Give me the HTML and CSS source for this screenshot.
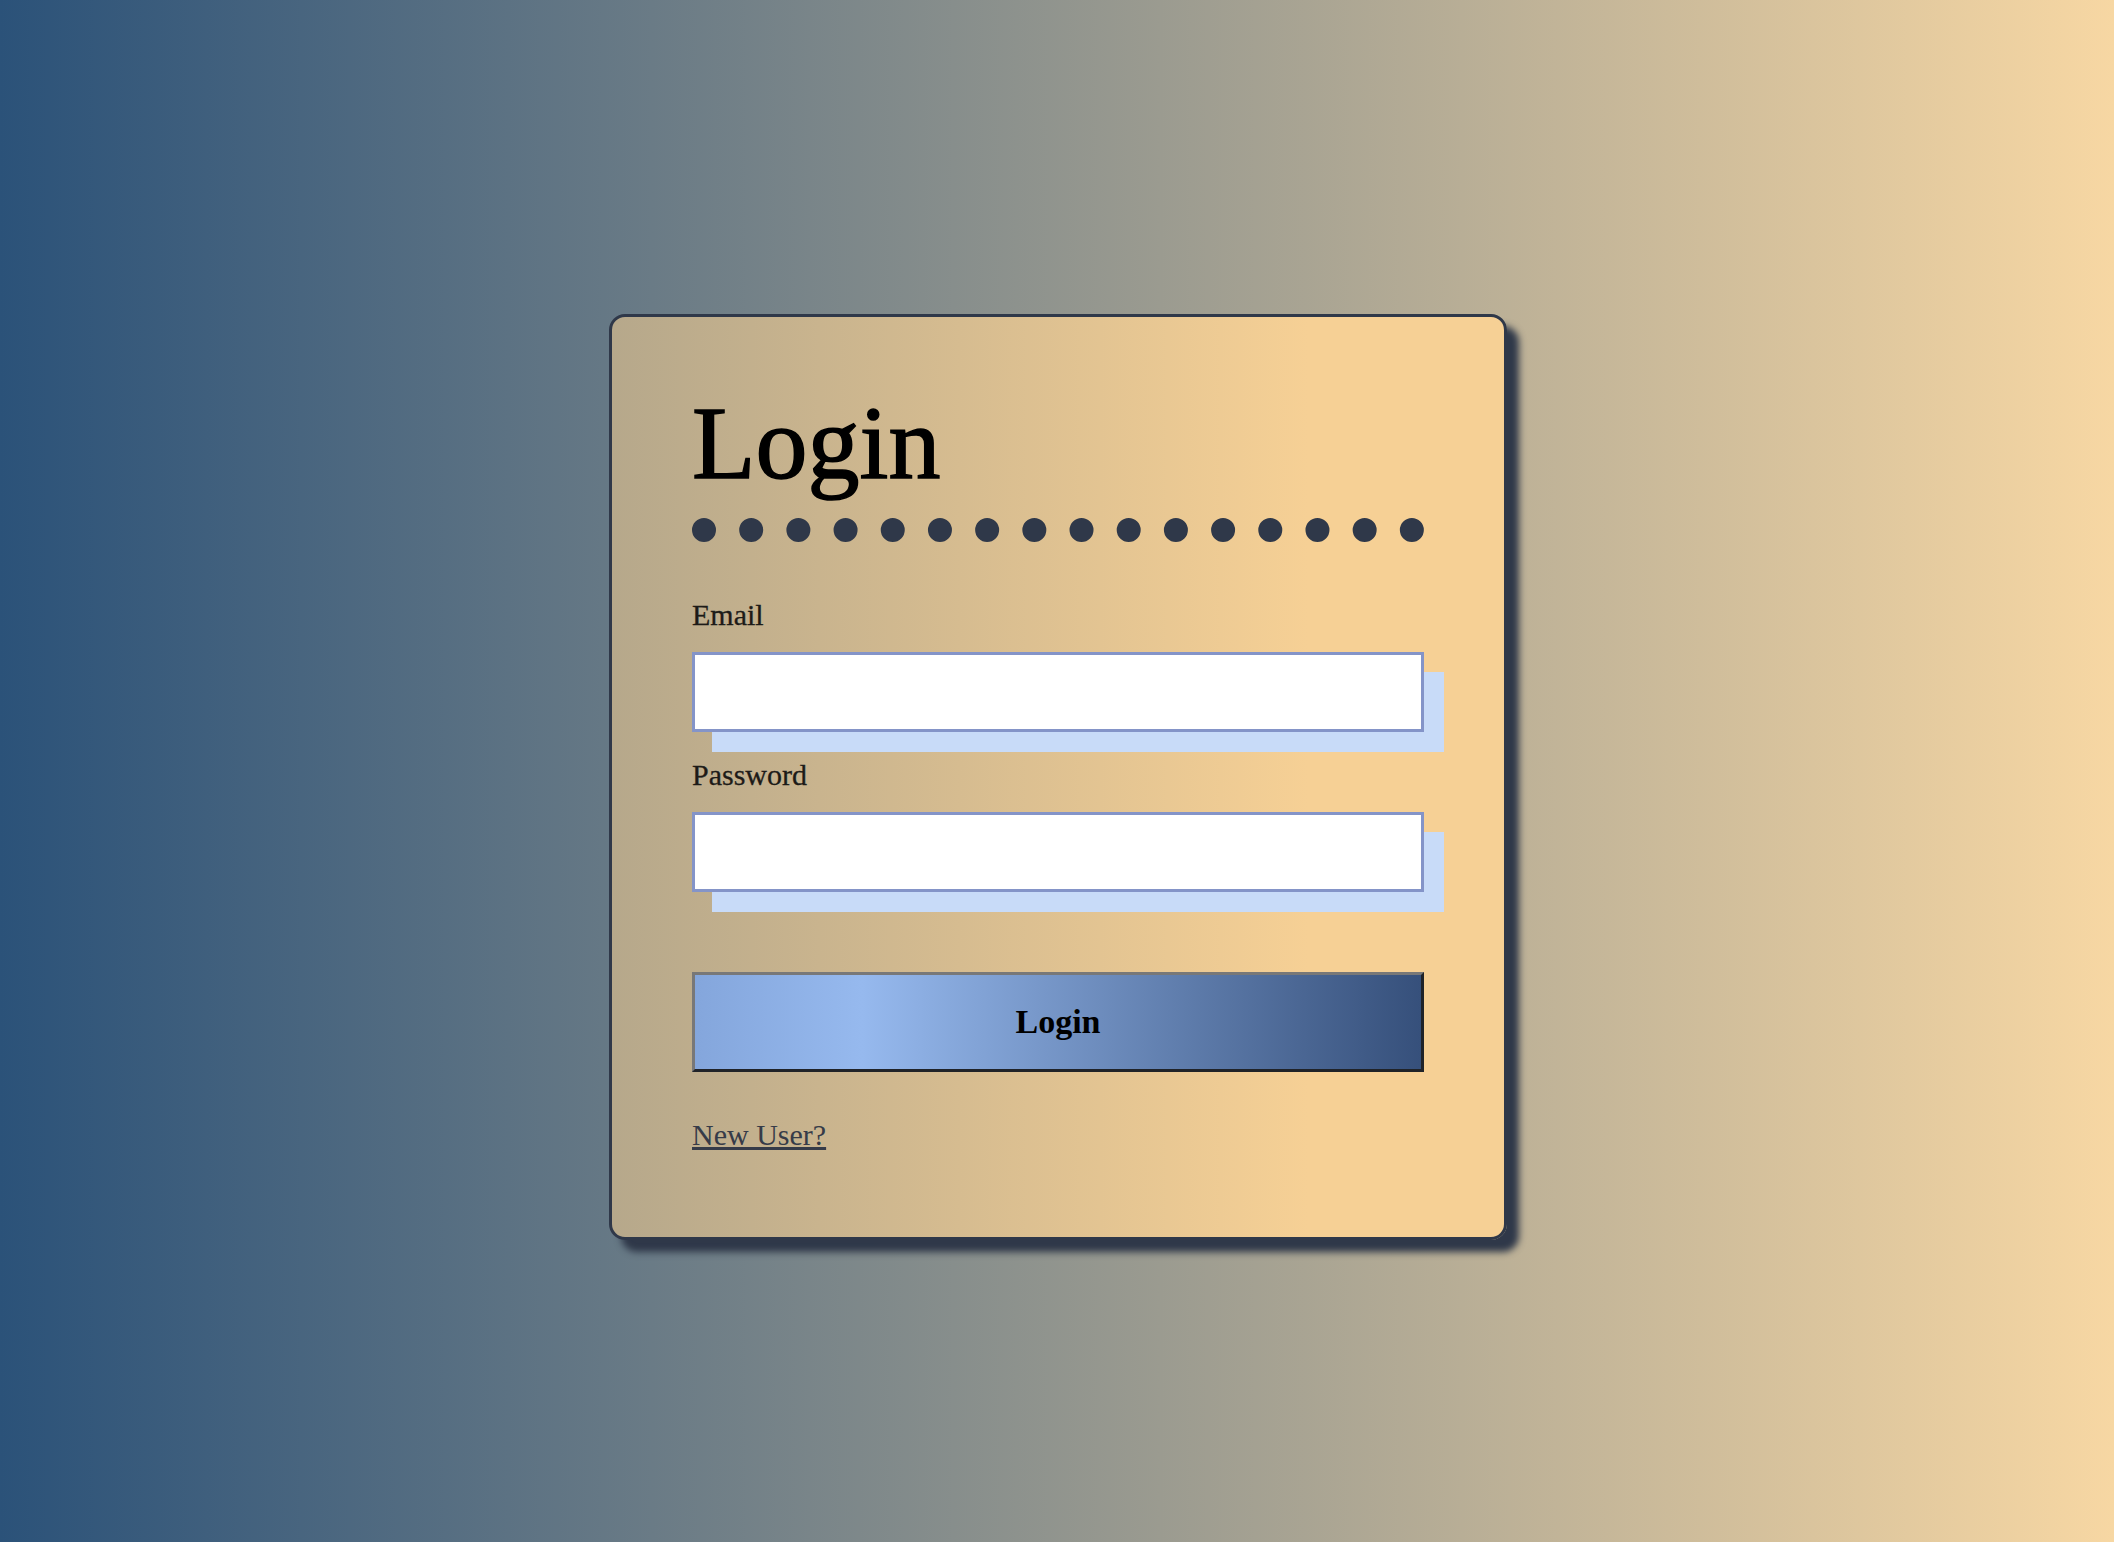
FILE: index.html
```html
<!DOCTYPE html>
<html lang="en">
<head>
<meta charset="utf-8">
<title>Login</title>
<link rel="stylesheet" href="styles.css">
</head>
<body>
  <main class="card">
    <h1 class="title">Login</h1>
    <form class="form">
      <label class="label" for="email">Email</label>
      <input class="field" id="email" type="email">
      <label class="label label-gap" for="password">Password</label>
      <input class="field" id="password" type="password">
      <button class="btn" type="button">Login</button>
      <div class="link-row"><a class="link" href="#">New User?</a></div>
    </form>
  </main>
</body>
</html>
```

FILE: styles.css
```css
html, body {
  margin: 0;
  padding: 0;
}

body {
  min-height: 100vh;
  box-sizing: border-box;
  padding-top: 12px;
  padding-left: 2px;
  display: flex;
  align-items: center;
  justify-content: center;
  background: linear-gradient(to right, #2b5279, #f7d7a3);
  font-family: "Liberation Serif", "Times New Roman", serif;
}

.card {
  width: 898px;
  box-sizing: border-box;
  padding: 74px 80px 87px;
  border: 3px solid #2f3849;
  border-radius: 16px;
  background: linear-gradient(to right, #b6a88b, #f6d095 78%);
  box-shadow: 12px 12px 7px #2f3849;
}

.title {
  margin: 0;
  font-size: 104px;
  font-weight: 400;
  line-height: 1;
  color: #000;
  -webkit-text-stroke: 1.5px #000;
  padding-bottom: 23px;
  border-bottom: 24px dotted #2f3849;
}

.form {
  display: flex;
  flex-direction: column;
  margin: 58px 0 0;
}

.label {
  font-size: 30px;
  line-height: 1;
  color: #1d1b18;
  -webkit-text-stroke: 0.3px #1d1b18;
}

.label-gap {
  margin-top: 28px;
}

.field {
  margin: 22px 0 0;
  height: 80px;
  box-sizing: border-box;
  border: 3px solid #8494c8;
  background: #fff;
  box-shadow: 20px 20px 0 #c8dbf8;
  outline: none;
  padding: 0 12px;
  font-size: 28px;
  font-family: inherit;
}

.btn {
  margin-top: 80px;
  height: 100px;
  box-sizing: border-box;
  border-style: solid;
  border-width: 3px;
  border-color: #787878 #202328 #202328 #787878;
  background: linear-gradient(to right, #84a6dc, #96b9ee 23%, #36507b);
  font-family: inherit;
  font-size: 34px;
  font-weight: 700;
  color: #000;
  cursor: pointer;
  padding: 0;
}

.link-row {
  margin-top: 48px;
  font-size: 30px;
  line-height: 1;
}

.link {
  color: #363b48;
  text-decoration: underline;
}
```
